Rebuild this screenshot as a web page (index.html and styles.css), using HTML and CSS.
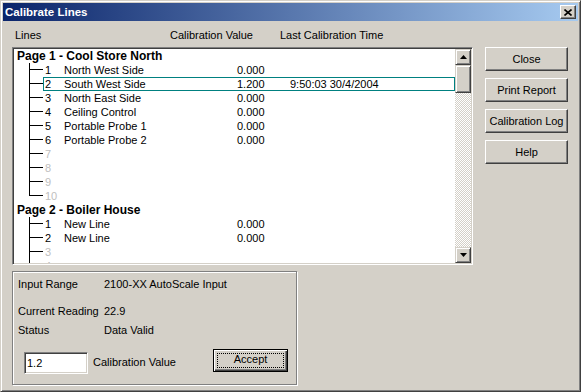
FILE: index.html
```html
<!DOCTYPE html>
<html lang="en">
<head>
    <meta charset="UTF-8">
    <title>Calibrate Lines</title>
    <link rel="stylesheet" href="styles.css">
</head>
<body>
<div class="window">
    <div class="titlebar">
        <span class="title">Calibrate Lines</span>
        <button class="title-close" type="button">
            <svg width="8" height="7" viewBox="0 0 8 7"><path d="M0.5 0.5 L7.5 6.5 M7.5 0.5 L0.5 6.5" stroke="#000" stroke-width="1.6"/></svg>
        </button>
    </div>

    <div class="client">
        <div class="col-heads">
            <span class="head-lines">Lines</span>
            <span class="head-value">Calibration Value</span>
            <span>Last Calibration Time</span>
        </div>

        <div class="main">
            <div class="listbox">
                <div class="tree">
                    <div class="page">Page 1 - Cool Store North</div>
                    <div class="row"><span class="gutter"><span class="branch"><span class="stub"></span></span></span><span class="cells"><span class="num">1</span><span class="name">North West Side</span><span class="val">0.000</span></span></div>
                    <div class="row"><span class="gutter"><span class="branch"><span class="stub"></span></span></span><span class="cells selected"><span class="num">2</span><span class="name">South West Side</span><span class="val">1.200</span><span class="time">9:50:03 30/4/2004</span></span></div>
                    <div class="row"><span class="gutter"><span class="branch"><span class="stub"></span></span></span><span class="cells"><span class="num">3</span><span class="name">North East Side</span><span class="val">0.000</span></span></div>
                    <div class="row"><span class="gutter"><span class="branch"><span class="stub"></span></span></span><span class="cells"><span class="num">4</span><span class="name">Ceiling Control</span><span class="val">0.000</span></span></div>
                    <div class="row"><span class="gutter"><span class="branch"><span class="stub"></span></span></span><span class="cells"><span class="num">5</span><span class="name">Portable Probe 1</span><span class="val">0.000</span></span></div>
                    <div class="row"><span class="gutter"><span class="branch"><span class="stub"></span></span></span><span class="cells"><span class="num">6</span><span class="name">Portable Probe 2</span><span class="val">0.000</span></span></div>
                    <div class="row unused"><span class="gutter"><span class="branch"><span class="stub"></span></span></span><span class="cells"><span class="num">7</span></span></div>
                    <div class="row unused"><span class="gutter"><span class="branch"><span class="stub"></span></span></span><span class="cells"><span class="num">8</span></span></div>
                    <div class="row unused"><span class="gutter"><span class="branch"><span class="stub"></span></span></span><span class="cells"><span class="num">9</span></span></div>
                    <div class="row unused last"><span class="gutter"><span class="branch"><span class="stub"></span></span></span><span class="cells"><span class="num">10</span></span></div>

                    <div class="page">Page 2 - Boiler House</div>
                    <div class="row"><span class="gutter"><span class="branch"><span class="stub"></span></span></span><span class="cells"><span class="num">1</span><span class="name">New Line</span><span class="val">0.000</span></span></div>
                    <div class="row"><span class="gutter"><span class="branch"><span class="stub"></span></span></span><span class="cells"><span class="num">2</span><span class="name">New Line</span><span class="val">0.000</span></span></div>
                    <div class="row unused"><span class="gutter"><span class="branch"><span class="stub"></span></span></span><span class="cells"><span class="num">3</span></span></div>
                    <div class="row unused"><span class="gutter"><span class="branch"><span class="stub"></span></span></span><span class="cells"><span class="num">4</span></span></div>
                </div>

                <div class="scrollbar">
                    <div class="sb-btn">
                        <svg width="7" height="4" viewBox="0 0 7 4"><polygon points="3.5,0 7,4 0,4" fill="#000"/></svg>
                    </div>
                    <div class="sb-thumb"></div>
                    <div class="sb-track"></div>
                    <div class="sb-btn">
                        <svg width="7" height="4" viewBox="0 0 7 4"><polygon points="0,0 7,0 3.5,4" fill="#000"/></svg>
                    </div>
                </div>
            </div>

            <div class="buttons">
                <button class="btn" type="button">Close</button>
                <button class="btn" type="button">Print Report</button>
                <button class="btn" type="button">Calibration Log</button>
                <button class="btn" type="button">Help</button>
            </div>
        </div>

        <div class="groupbox">
            <div class="info first">
                <span class="info-label">Input Range</span>
                <span>2100-XX AutoScale Input</span>
            </div>
            <div class="info second">
                <span class="info-label">Current Reading</span>
                <span>22.9</span>
            </div>
            <div class="info third">
                <span class="info-label">Status</span>
                <span>Data Valid</span>
            </div>
            <div class="cal-row">
                <input class="cal-input" type="text" value="1.2">
                <span class="cal-label">Calibration Value</span>
                <button class="btn default" type="button"><span class="focus">Accept</span></button>
            </div>
        </div>
    </div>
</div>
</body>
</html>
```

FILE: styles.css
```css
* {
    box-sizing: border-box;
    margin: 0;
    padding: 0;
}

body {
    font-family: "Liberation Sans", Arial, sans-serif;
    font-size: 11px;
    color: #000;
    background: #d4d0c8;
}

/* window frame */
.window {
    width: 581px;
    height: 392px;
    background: #d4d0c8;
    border: 1px solid;
    border-color: #d4d0c8 #404040 #404040 #d4d0c8;
    box-shadow: inset 1px 1px #fff, inset -1px -1px #808080;
    padding: 2px;
}

.titlebar {
    height: 18px;
    display: flex;
    align-items: center;
    justify-content: space-between;
    padding: 0 2px 0 2px;
    background: linear-gradient(to right, #0a246a, #a6caf0);
    color: #fff;
    font-weight: bold;
    font-size: 11.5px;
}

.title-close {
    width: 16px;
    height: 14px;
    display: flex;
    align-items: center;
    justify-content: center;
    background: #d4d0c8;
    border: 1px solid;
    border-color: #fff #404040 #404040 #fff;
    box-shadow: inset -1px -1px #808080;
}

.client {
    padding: 8px 0 0 9px;
}

.col-heads {
    display: flex;
    height: 13px;
    line-height: 13px;
    margin-bottom: 5px;
}

.head-lines {
    width: 158px;
    padding-left: 3px;
}

.head-value {
    width: 110px;
}

.main {
    display: flex;
    height: 218px;
}

/* list with tree */
.listbox {
    width: 461px;
    display: flex;
    background: #fff;
    border: 1px solid;
    border-color: #808080 #fff #fff #808080;
    box-shadow: inset 1px 1px #404040, inset -1px -1px #d4d0c8;
    padding: 1px;
}

.tree {
    flex: 1;
    overflow: hidden;
}

.page {
    height: 14px;
    line-height: 14px;
    padding-left: 3px;
    font-weight: bold;
    font-size: 12px;
}

.row {
    display: flex;
    height: 14px;
    line-height: 14px;
}

.gutter {
    width: 29px;
    flex-shrink: 0;
    display: flex;
}

.branch {
    margin-left: 15px;
    width: 14px;
    border-left: 1px solid #000;
}

.stub {
    display: block;
    height: 7px;
    border-bottom: 1px solid #000;
}

.row.last .branch {
    border-left: none;
}

.row.last .stub {
    border-left: 1px solid #000;
}

.cells {
    flex: 1;
    display: flex;
}

.cells.selected {
    outline: 1px solid #008080;
    outline-offset: -1px;
}

.num {
    width: 21px;
    padding-left: 2px;
}

.name {
    width: 173px;
}

.val {
    width: 53px;
}

.row.unused {
    color: #c0c0c0;
}

/* scrollbar */
.scrollbar {
    width: 16px;
    display: flex;
    flex-direction: column;
}

.sb-btn,
.sb-thumb {
    background: #d4d0c8;
    border: 1px solid;
    border-color: #d4d0c8 #404040 #404040 #d4d0c8;
    box-shadow: inset 1px 1px #fff, inset -1px -1px #808080;
}

.sb-btn {
    height: 16px;
    display: flex;
    align-items: center;
    justify-content: center;
}

.sb-thumb {
    height: 28px;
}

.sb-track {
    flex: 1;
    background: repeating-conic-gradient(#d4d0c8 0 25%, #fff 0 50%) 0 0 / 2px 2px;
}

/* buttons */
.buttons {
    width: 83px;
    margin-left: 12px;
    display: flex;
    flex-direction: column;
    gap: 7px;
}

.btn {
    height: 24px;
    font-family: inherit;
    font-size: 11px;
    color: #000;
    background: #d4d0c8;
    border: 1px solid;
    border-color: #fff #404040 #404040 #fff;
    box-shadow: inset -1px -1px #808080;
}

.btn.default {
    width: 75px;
    height: 23px;
    margin-left: auto;
    border: 1px solid #000;
    box-shadow: inset 1px 1px #fff, inset -1px -1px #404040, inset -2px -2px #808080;
    padding: 3px;
}

.btn.default .focus {
    display: block;
    height: 100%;
    line-height: 13px;
    outline: 1px dotted #000;
    outline-offset: -1px;
}

/* calibration box */
.groupbox {
    width: 285px;
    height: 114px;
    margin-top: 6px;
    border: 1px solid #808080;
    box-shadow: inset 1px 1px #fff, 1px 1px #fff;
    padding: 6px 8px 0 5px;
}

.info {
    display: flex;
    height: 13px;
    line-height: 13px;
}

.info-label {
    width: 86px;
}

.info.second {
    margin-top: 14px;
}

.info.third {
    margin-top: 6px;
}

.cal-row {
    display: flex;
    align-items: flex-start;
    margin-top: 12px;
}

.cal-input {
    width: 64px;
    height: 22px;
    margin: 3px 0 0 6px;
    padding-left: 2px;
    font-family: inherit;
    font-size: 11px;
    background: #fff;
    border: 1px solid;
    border-color: #808080 #fff #fff #808080;
    box-shadow: inset 1px 1px #404040, inset -1px -1px #d4d0c8;
    outline: none;
}

.cal-label {
    margin: 7px 0 0 5px;
    line-height: 13px;
}
```
